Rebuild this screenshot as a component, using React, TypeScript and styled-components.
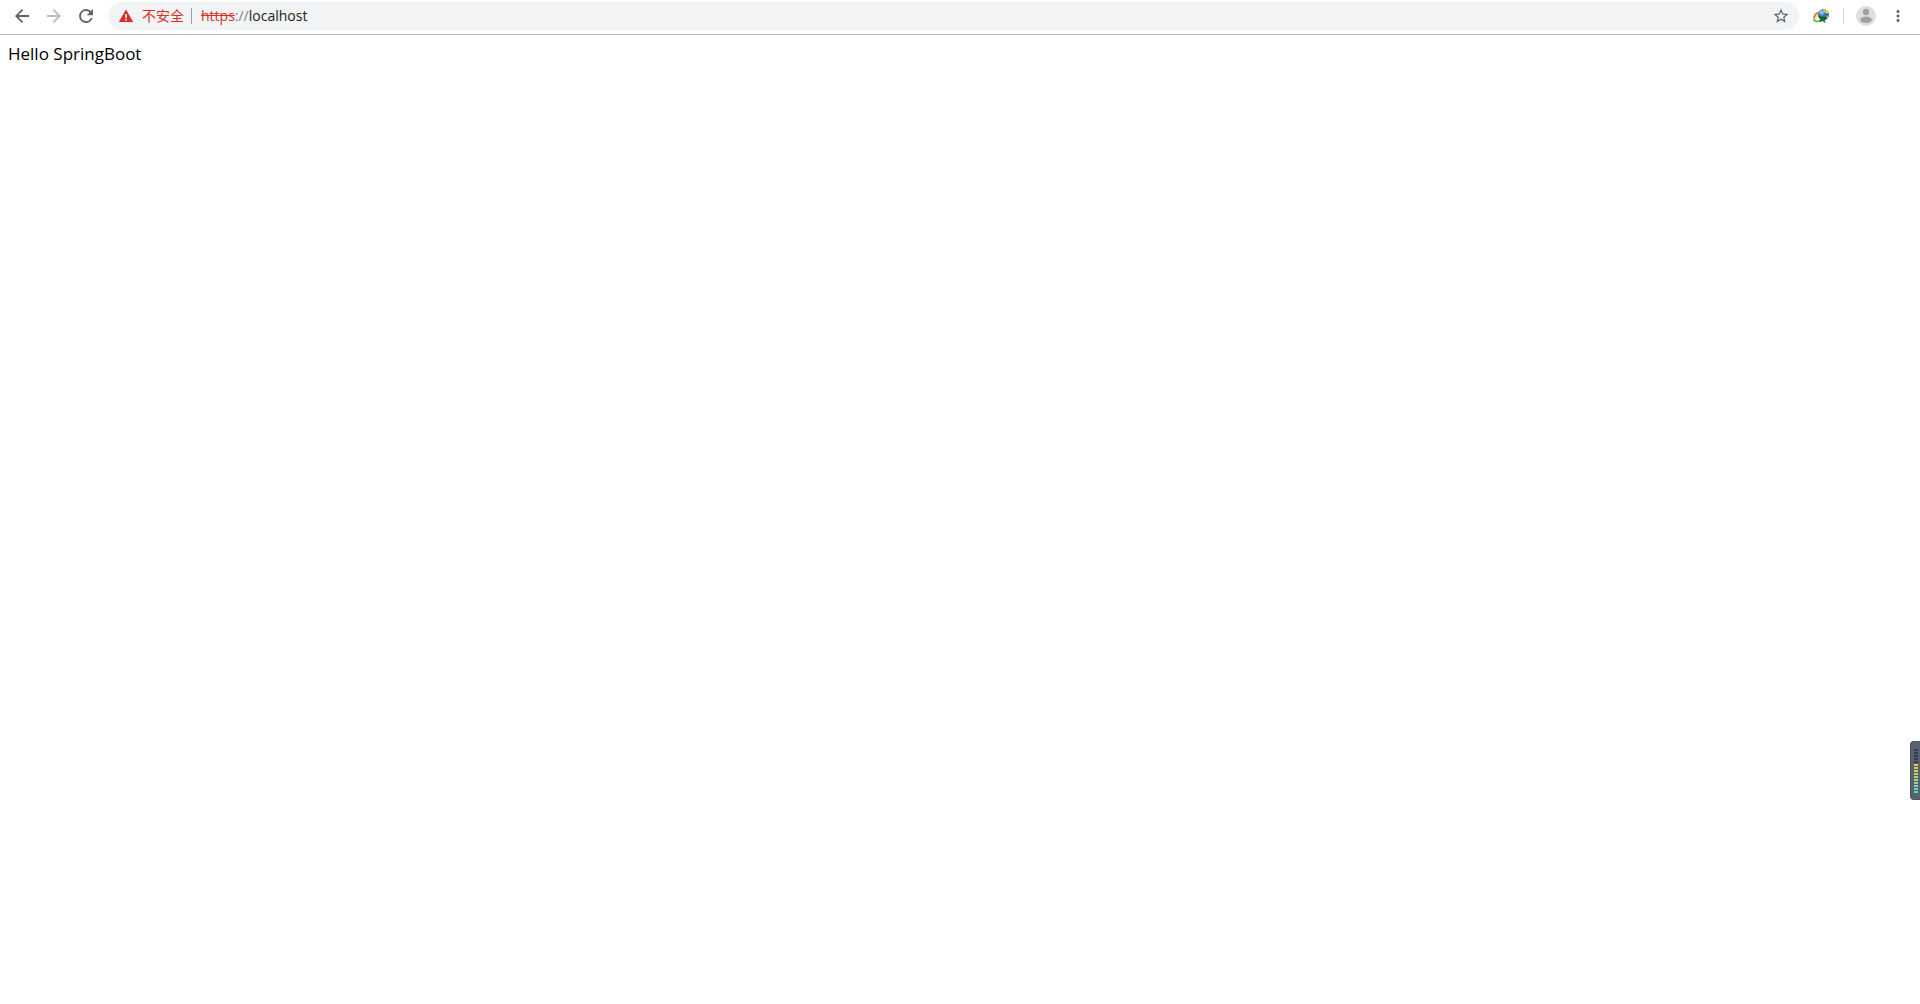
import React from "react";
import styled, { createGlobalStyle } from "styled-components";

const GlobalStyle = createGlobalStyle`
  *, *::before, *::after { box-sizing: border-box; }
  body {
    margin: 0;
    background: #fff;
    color: #000;
    font-family: "Open Sans", "Noto Sans CJK SC", sans-serif;
    font-size: 17px;
  }
`;

const Toolbar = styled.header`
  display: flex;
  align-items: flex-start;
  height: 35px;
  padding: 2px 8px 0 8px;
  border-bottom: 1px solid #b4b5b6;
`;

const NavGroup = styled.nav`
  display: flex;
  gap: 4px;
  margin-right: 8px;
`;

const IconButton = styled.button<{ $color?: string }>`
  display: flex;
  align-items: center;
  justify-content: center;
  flex: none;
  width: 28px;
  height: 28px;
  padding: 0;
  border: 0;
  border-radius: 50%;
  background: none;
  color: ${(p) => p.$color ?? "#5f6368"};
`;

const Omnibox = styled.form`
  display: flex;
  align-items: center;
  flex: 1;
  min-width: 0;
  height: 28px;
  padding: 0 4px 0 10px;
  border-radius: 14px;
  background: #f1f3f4;
  font-size: 14px;
  line-height: 20px;
`;

const SecurityChip = styled.button`
  display: flex;
  align-items: center;
  gap: 8px;
  height: 20px;
  padding: 0;
  border: 0;
  background: none;
  color: #d93025;
  font: inherit;
  white-space: nowrap;
`;

const Divider = styled.span<{ $color: string }>`
  flex: none;
  width: 1px;
  height: 16px;
  background: ${(p) => p.$color};
`;

const ChipDivider = styled(Divider)`
  margin: 0 9px 0 7px;
`;

const AddressLabel = styled.label`
  color: #80868b;
  white-space: nowrap;
`;

const Scheme = styled.s`
  color: #d93025;
`;

const AddressInput = styled.input`
  flex: 1;
  min-width: 0;
  height: 20px;
  padding: 0;
  border: 0;
  outline: 0;
  background: none;
  color: #202124;
  font: inherit;
`;

const Actions = styled.div`
  display: flex;
  align-items: center;
  height: 28px;
  margin-left: 8px;
`;

const ActionsDivider = styled(Divider)`
  margin: 0 8px;
`;

const MenuButton = styled(IconButton)`
  margin-left: 4px;
`;

const Page = styled.main`
  padding: 8px;
  line-height: 22px;
`;

const Meter = styled.aside`
  position: fixed;
  top: 741px;
  right: 0;
  display: flex;
  flex-direction: column;
  gap: 1px;
  width: 10px;
  height: 59px;
  padding: 7px 0 0 3px;
  border: 1px solid #4b525e;
  border-right: 0;
  border-radius: 4px 0 0 4px;
  background: #596170;
`;

const Segment = styled.span<{ $color: string }>`
  flex: none;
  width: 4px;
  height: 2px;
  background: ${(p) => p.$color};
`;

const segments = [
  "#373c47", "#373c47", "#373c47", "#373c47", "#373c47",
  "#e8c34c", "#ddc954", "#cfd05b", "#bfd464", "#add86d",
  "#9bd97b", "#88da8e", "#76d9a4", "#66d8b8", "#58d8c8",
];

const Glyph = ({ d, size = 20 }: { d: string; size?: number }) => (
  <svg width={size} height={size} viewBox="0 0 24 24" fill="currentColor" aria-hidden="true">
    <path d={d} />
  </svg>
);

const WarningIcon = () => (
  <svg width="16" height="16" viewBox="0 0 16 16" aria-hidden="true">
    <path d="M8 1.5L15.2 14H.8z" fill="#d93025" />
    <path d="M7.2 6h1.6v3.7H7.2zM7.2 10.8h1.6v1.7H7.2z" fill="#fff" />
  </svg>
);

const GlobeIcon = () => (
  <svg width="16" height="16" viewBox="0 0 16 16" aria-hidden="true">
    <defs>
      <radialGradient id="globe" cx="35%" cy="30%" r="75%">
        <stop offset="0" stopColor="#c4dcf8" />
        <stop offset=".35" stopColor="#4787d6" />
        <stop offset="1" stopColor="#143577" />
      </radialGradient>
    </defs>
    <path d="M.9 11.2C.9 7.4 3 4.9 6.4 4.4" fill="none" stroke="#e24a35" strokeWidth="1.3" />
    <path d="M1.9 11.8C2 8.6 3.9 6.2 6.8 5.6" fill="none" stroke="#f3c93b" strokeWidth="1.3" />
    <path d="M3 12C3.2 9.4 4.7 7.3 7 6.8" fill="none" stroke="#fff3b8" strokeWidth="1" />
    <path d="M.6 11.5c1.4 2.2 4.9 2.4 8 .8" fill="none" stroke="#5cb83a" strokeWidth="1.8" />
    <circle cx="10.4" cy="6.6" r="5.5" fill="url(#globe)" />
    <path d="M10.8 1.2c2.4.1 4.4 1.8 4.9 4.2-.8.7-2.2.5-2.8-.4-1-.4-1.2-1.2-2.1-1.5-.7-.7-.6-1.6 0-2.3z" fill="#d9cf4c" />
    <path d="M13 7.6l2.6-.2c-.1 1.3-.7 2.5-1.6 3.3z" fill="#b9bd45" />
    <path d="M5.8 8.2l7.4 2-1.8 1 .6 3.4-2.4-1.8-2.8.6 1-2.4z" fill="#0e7d1c" stroke="#07450d" strokeWidth=".5" />
  </svg>
);

const AvatarIcon = () => (
  <svg width="20" height="20" viewBox="0 0 20 20" aria-hidden="true">
    <circle cx="10" cy="10" r="10" fill="#dedede" />
    <circle cx="10" cy="6" r="3.2" fill="#a0a0a0" />
    <ellipse cx="10" cy="13.7" rx="5.8" ry="3.1" fill="#a0a0a0" />
  </svg>
);

export default function App() {
  return (
    <>
      <GlobalStyle />
      <Toolbar>
        <NavGroup>
          <IconButton type="button" aria-label="后退">
            <Glyph d="M20.5 10.8H7.83l5.59-5.59L12 3.6 3.6 12l8.4 8.4 1.41-1.61L7.83 13.2H20.5v-2.4z" />
          </IconButton>
          <IconButton type="button" aria-label="前进" $color="#babcbe">
            <Glyph d="M12 3.6l-1.41 1.61 5.58 5.59H3.5v2.4h12.67l-5.58 5.59L12 20.4l8.4-8.4z" />
          </IconButton>
          <IconButton type="button" aria-label="重新加载">
            <Glyph d="M17.9 6.1A8.3 8.3 0 0 0 12 3.7a8.3 8.3 0 1 0 8 10.6h-2.4A6 6 0 1 1 12 6c1.66 0 3.14.69 4.22 1.78L12.8 11.2h7.6V3.6L17.9 6.1z" />
          </IconButton>
        </NavGroup>
        <Omnibox onSubmit={(e) => e.preventDefault()}>
          <SecurityChip type="button">
            <WarningIcon />
            不安全
          </SecurityChip>
          <ChipDivider $color="#9aa0a6" />
          <AddressLabel htmlFor="address">
            <Scheme>https</Scheme>://
          </AddressLabel>
          <AddressInput id="address" type="text" defaultValue="localhost" spellCheck={false} />
          <IconButton type="button" aria-label="收藏">
            <Glyph
              size={18}
              d="M22 9.24l-7.19-.62L12 2 9.19 8.63 2 9.24l5.46 4.73L5.82 21 12 17.27 18.18 21l-1.63-7.03L22 9.24zM12 15.4l-3.76 2.27 1-4.28-3.32-2.88 4.38-.38L12 6.1l1.71 4.04 4.38.38-3.32 2.88 1 4.28L12 15.4z"
            />
          </IconButton>
        </Omnibox>
        <Actions>
          <IconButton type="button" aria-label="扩展程序">
            <GlobeIcon />
          </IconButton>
          <ActionsDivider $color="#d0d2d5" />
          <IconButton type="button" aria-label="用户">
            <AvatarIcon />
          </IconButton>
          <MenuButton type="button" aria-label="菜单">
            <Glyph
              size={18}
              d="M12 8c1.1 0 2-.9 2-2s-.9-2-2-2-2 .9-2 2 .9 2 2 2zm0 2c-1.1 0-2 .9-2 2s.9 2 2 2 2-.9 2-2-.9-2-2-2zm0 6c-1.1 0-2 .9-2 2s.9 2 2 2 2-.9 2-2-.9-2-2-2z"
            />
          </MenuButton>
        </Actions>
      </Toolbar>
      <Page>Hello SpringBoot</Page>
      <Meter>
        {segments.map((color, i) => (
          <Segment key={i} $color={color} />
        ))}
      </Meter>
    </>
  );
}
